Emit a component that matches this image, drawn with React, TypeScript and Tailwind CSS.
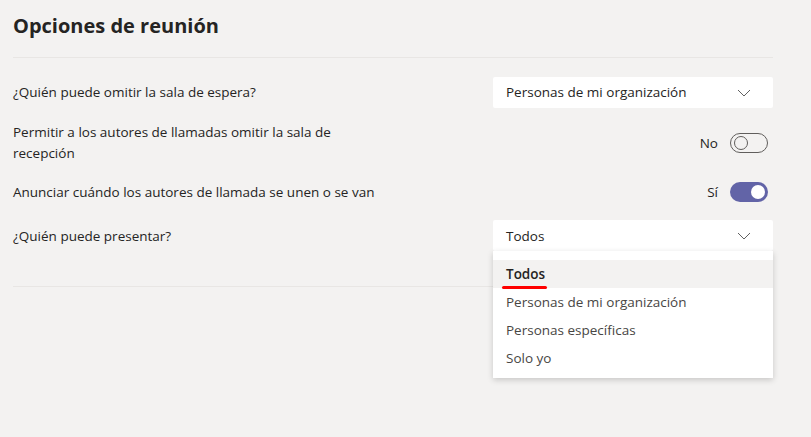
import { useState } from 'react';

const FONT = { fontFamily: '"Segoe UI", "Open Sans", "Noto Sans", sans-serif' };

const PRESENTER_OPTIONS = ['Todos', 'Personas de mi organización', 'Personas específicas', 'Solo yo'];

function Chevron() {
  return (
    <svg width="14" height="8" viewBox="0 0 14 8" fill="none" className="text-[#616161]">
      <path d="M1 1l6 6 6-6" stroke="currentColor" strokeWidth="1" />
    </svg>
  );
}

function Dropdown({ value, children }: { value: string; children?: React.ReactNode }) {
  return (
    <div className="relative w-[280px]">
      <button className="flex h-[31px] w-full items-center justify-between rounded-[2px] bg-white pl-[13px] pr-[22px] text-[13.5px] text-[#252423]">
        <span>{value}</span>
        <Chevron />
      </button>
      {children}
    </div>
  );
}

function Toggle({ on, label }: { on: boolean; label: string }) {
  return (
    <div className="flex items-center gap-[12px] pr-[5px]">
      <span className="text-[13.5px] text-[#252423]">{label}</span>
      <span
        className={`flex h-[20px] w-[38px] items-center rounded-full px-[3px] ${
          on ? 'justify-end bg-[#6264a7]' : 'justify-start border border-[#605e5c]'
        }`}
      >
        <span className={`h-[14px] w-[14px] rounded-full ${on ? 'bg-white' : 'border border-[#605e5c]'}`} />
      </span>
    </div>
  );
}

export default function App() {
  const [presenter] = useState('Todos');

  return (
    <div className="min-h-[437px] w-full bg-[#f3f2f1] text-[#252423]" style={FONT}>
      <div className="w-[773px] pl-[13px]">
        <h1 className="pt-[12px] text-[20px] font-bold leading-[28px]">Opciones de reunión</h1>
        <div className="mt-[17px] border-t border-[#e8e6e4]" />

        <div className="mt-[19px] flex items-center justify-between">
          <span className="text-[13.5px]">¿Quién puede omitir la sala de espera?</span>
          <Dropdown value="Personas de mi organización" />
        </div>

        <div className="mt-[14px] flex items-center justify-between">
          <span className="w-[370px] text-[13.5px] leading-[21px]">
            Permitir a los autores de llamadas omitir la sala de recepción
          </span>
          <Toggle on={false} label="No" />
        </div>

        <div className="mt-[18px] flex items-center justify-between">
          <span className="text-[13.5px]">Anunciar cuándo los autores de llamada se unen o se van</span>
          <Toggle on label="Sí" />
        </div>

        <div className="mt-[18px] flex items-center justify-between">
          <span className="text-[13.5px]">¿Quién puede presentar?</span>
          <Dropdown value={presenter}>
            <ul className="absolute left-0 top-full z-10 w-full bg-white pb-[6px] pt-[9px] shadow-[0_2px_6px_rgba(0,0,0,0.18)]">
              {PRESENTER_OPTIONS.map((opt, i) => (
                <li
                  key={opt}
                  className={`flex h-[28px] items-center px-[13px] text-[13.5px] ${
                    i === 0 ? 'bg-[#f3f2f1] font-semibold text-[#252423]' : 'text-[#484644]'
                  }`}
                >
                  {i === 0 ? (
                    <span className="relative">
                      {opt}
                      <span className="absolute -bottom-[5px] -left-[4px] -right-[2px] h-[3px] rounded-full bg-[#ff0000]" />
                    </span>
                  ) : (
                    opt
                  )}
                </li>
              ))}
            </ul>
          </Dropdown>
        </div>

        <div className="mt-[35px] border-t border-[#e8e6e4]" />

        <div className="mt-[20px] flex justify-end">
          <button className="h-[32px] w-[96px] rounded-[2px] border border-[#e1dfdd] bg-[#f3f2f1] text-[14px] text-[#a19f9d]">
            Guardar
          </button>
        </div>
      </div>
    </div>
  );
}
